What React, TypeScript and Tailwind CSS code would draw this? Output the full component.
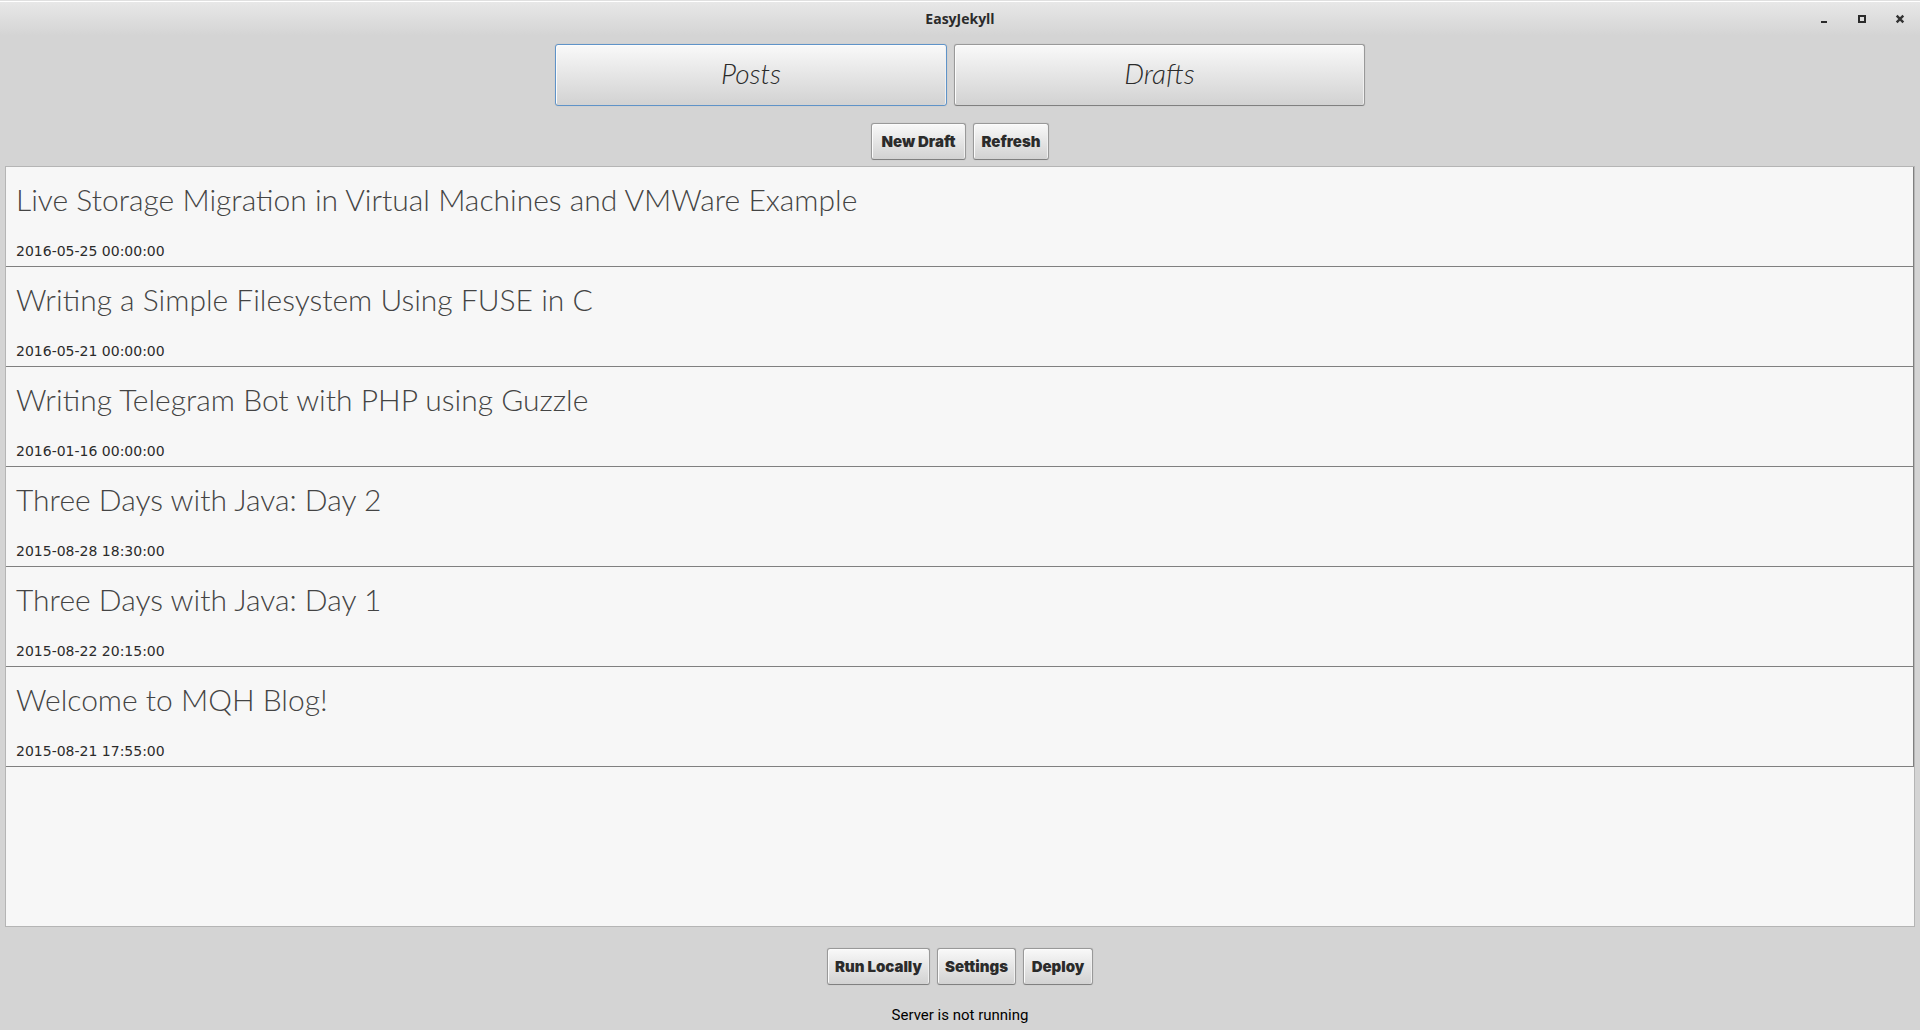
import { clsx } from "clsx";
import type { ReactNode } from "react";

const posts = [
  { title: "Live Storage Migration in Virtual Machines and VMWare Example", date: "2016-05-25 00:00:00" },
  { title: "Writing a Simple Filesystem Using FUSE in C", date: "2016-05-21 00:00:00" },
  { title: "Writing Telegram Bot with PHP using Guzzle", date: "2016-01-16 00:00:00" },
  { title: "Three Days with Java: Day 2", date: "2015-08-28 18:30:00" },
  { title: "Three Days with Java: Day 1", date: "2015-08-22 20:15:00" },
  { title: "Welcome to MQH Blog!", date: "2015-08-21 17:55:00" },
];

const raised =
  "rounded-[3px] border bg-linear-to-b from-[#f9f9f9] to-[#d2d2d2] text-[#2b2b2b] shadow-[inset_1px_1px_0_#fcfcfc,inset_-1px_0_0_#f0f0f0,0_0_1px_#aaa]";

function TabButton({ active, className, children }: { active?: boolean; className: string; children: ReactNode }) {
  return (
    <button
      type="button"
      aria-pressed={!!active}
      className={clsx(
        raised,
        "flex h-[62px] items-center justify-center pb-1 font-['Lato',sans-serif] text-[28px] leading-9 font-light italic",
        active ? "border-[#5f93c8]" : "border-[#999] border-b-[#808080]",
        className
      )}
    >
      {children}
    </button>
  );
}

function Button({ className, children }: { className: string; children: ReactNode }) {
  return (
    <button
      type="button"
      className={clsx(
        raised,
        "h-[37px] border-[#999] border-b-[#808080] text-center font-['Inter',sans-serif] text-[15px] leading-5 font-black whitespace-nowrap",
        className
      )}
    >
      {children}
    </button>
  );
}

export default function App() {
  return (
    <div className="flex min-h-screen flex-col bg-[#d4d4d4] text-[#2b2b2b]">
      {/* Title bar */}
      <header className="grid h-9 grid-cols-[1fr_auto_1fr] items-center border-t border-[#e0e0e0] bg-linear-to-b from-[#e8e8e8] to-[#d4d4d4] shadow-[inset_0_1px_0_#fff]">
        <h1 className="col-start-2 font-['Open_Sans',sans-serif] text-sm leading-5 font-bold">EasyJekyll</h1>
        <div className="flex justify-end gap-[22px] pr-[12px]">
          <button type="button" aria-label="Minimize" className="size-4">
            <svg viewBox="0 0 16 16" className="size-4" shapeRendering="crispEdges">
              <path d="M5 10h6v2H5z" fill="#2b2b2b" />
            </svg>
          </button>
          <button type="button" aria-label="Maximize" className="size-4">
            <svg viewBox="0 0 16 16" className="size-4" shapeRendering="crispEdges">
              <path d="M5 5h6v6H5z" fill="none" stroke="#2b2b2b" strokeWidth="2" />
            </svg>
          </button>
          <button type="button" aria-label="Close" className="size-4">
            <svg viewBox="0 0 16 16" className="size-4">
              <path d="M4.7 4.7l6.6 6.6M11.3 4.7l-6.6 6.6" stroke="#333" strokeWidth="2.4" />
            </svg>
          </button>
        </div>
      </header>

      <nav className="mt-2 flex justify-center gap-[7px]">
        <TabButton active className="w-[392px]">Posts</TabButton>
        <TabButton className="w-[411px]">Drafts</TabButton>
      </nav>

      <div className="mt-[17px] flex justify-center gap-[7px]">
        <Button className="w-[95px]">New Draft</Button>
        <Button className="w-[76px]">Refresh</Button>
      </div>

      {/* Post list */}
      <main className="mx-[5px] mt-[6px] flex-1 border border-[#b5b5b5] bg-[#f7f7f7]">
        <ul>
          {posts.map((post) => (
            <li key={post.date} className="flex h-[100px] flex-col justify-between border-r border-b border-[#808080] px-[10px] pt-3 pb-[5px]">
              <h2 className="font-['Lato',sans-serif] text-[30px] leading-10 font-light text-[#444]">{post.title}</h2>
              <time className="font-['DejaVu_Sans',sans-serif] text-sm leading-5">{post.date}</time>
            </li>
          ))}
        </ul>
      </main>

      <footer className="flex flex-col items-center pt-[21px] pb-[5px]">
        <div className="flex gap-[7px]">
          <Button className="w-[103px]">Run Locally</Button>
          <Button className="w-[79px]">Settings</Button>
          <Button className="w-[70px]">Deploy</Button>
        </div>
        <p className="mt-5 font-['Roboto',sans-serif] text-[15px] leading-5 text-black">Server is not running</p>
      </footer>
    </div>
  );
}
